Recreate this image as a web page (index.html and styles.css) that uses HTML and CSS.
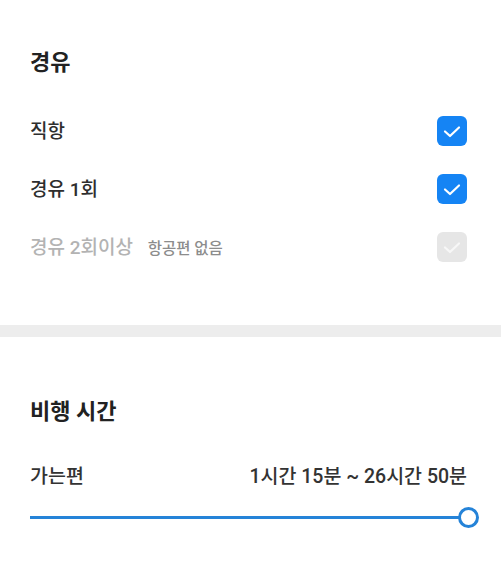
FILE: index.html
```html
<!DOCTYPE html>
<html lang="ko">

<head>
   <meta charset="UTF-8">
   <meta name="viewport" content="width=device-width, initial-scale=1.0">
   <title>항공권 필터</title>
   <link rel="stylesheet" href="styles.css">
</head>

<body>
   <section class="filter-section stops">
      <h2 class="section-title">경유</h2>
      <ul class="option-list">
         <li class="option-row">
            <span class="option-label">직항</span>
            <span class="checkbox checked">
               <svg width="30" height="30" viewBox="0 0 30 30" fill="none" stroke="currentColor" stroke-width="2.2" stroke-linecap="round" stroke-linejoin="round">
                  <path d="M8 15.5l5 4.5 9-8.5"/>
               </svg>
            </span>
         </li>
         <li class="option-row">
            <span class="option-label">경유 1회</span>
            <span class="checkbox checked">
               <svg width="30" height="30" viewBox="0 0 30 30" fill="none" stroke="currentColor" stroke-width="2.2" stroke-linecap="round" stroke-linejoin="round">
                  <path d="M8 15.5l5 4.5 9-8.5"/>
               </svg>
            </span>
         </li>
         <li class="option-row disabled">
            <span class="option-label">경유 2회이상 <small class="option-note">항공편 없음</small></span>
            <span class="checkbox">
               <svg width="30" height="30" viewBox="0 0 30 30" fill="none" stroke="currentColor" stroke-width="2.2" stroke-linecap="round" stroke-linejoin="round">
                  <path d="M8 15.5l5 4.5 9-8.5"/>
               </svg>
            </span>
         </li>
      </ul>
   </section>

   <div class="section-divider"></div>

   <section class="filter-section duration">
      <h2 class="section-title">비행 시간</h2>
      <div class="range-row">
         <span class="range-label">가는편</span>
         <span class="range-value">1시간 15분 ~ 26시간 50분</span>
      </div>
      <div class="slider">
         <div class="slider-track"></div>
         <div class="slider-knob"></div>
      </div>
   </section>
</body>

</html>
```

FILE: styles.css
```css
body {
   margin: 0;
   background-color: white;
   font-family: Roboto, "Noto Sans CJK KR", sans-serif;
   color: #2b2b2b;
}

.filter-section {
   padding: 0 34px 0 30px;
}

.stops {
   padding-top: 49px;
   padding-bottom: 49px;
}

.duration {
   padding-top: 61px;
   padding-bottom: 40px;
}

.section-title {
   margin: 0;
   font-size: 22px;
   line-height: 28px;
   font-weight: 700;
   color: #222;
}

.option-list {
   list-style: none;
   margin: 25px 0 0;
   padding: 0;
}

.option-row {
   display: flex;
   align-items: center;
   justify-content: space-between;
   height: 58px;
}

.option-label {
   padding-top: 2px;
   font-size: 19px;
   line-height: 24px;
   font-weight: 500;
   color: #2e2e2e;
}

.option-note {
   margin-left: 10px;
   font-size: 15.5px;
   color: #8c8c8c;
}

.option-row.disabled .option-label {
   color: #b3b3b3;
}

.checkbox {
   display: flex;
   width: 30px;
   height: 30px;
   border-radius: 6px;
   background-color: #e6e6e6;
   color: #f7f7f7;
}

.checkbox.checked {
   background-color: #1584f4;
   color: white;
}

.section-divider {
   height: 12px;
   background-color: #ededed;
}

.range-row {
   display: flex;
   justify-content: space-between;
   align-items: center;
   margin-top: 39px;
   font-size: 19.5px;
   line-height: 24px;
   font-weight: 500;
   color: #333;
}

.slider {
   position: relative;
   display: flex;
   align-items: center;
   height: 21px;
   margin-top: 18px;
}

.slider-track {
   flex: 1;
   height: 3px;
   background-color: #2583d8;
}

.slider-knob {
   position: absolute;
   right: -12px;
   top: 0;
   width: 15px;
   height: 15px;
   border: 3px solid #2583d8;
   border-radius: 50%;
   background-color: white;
}
```
